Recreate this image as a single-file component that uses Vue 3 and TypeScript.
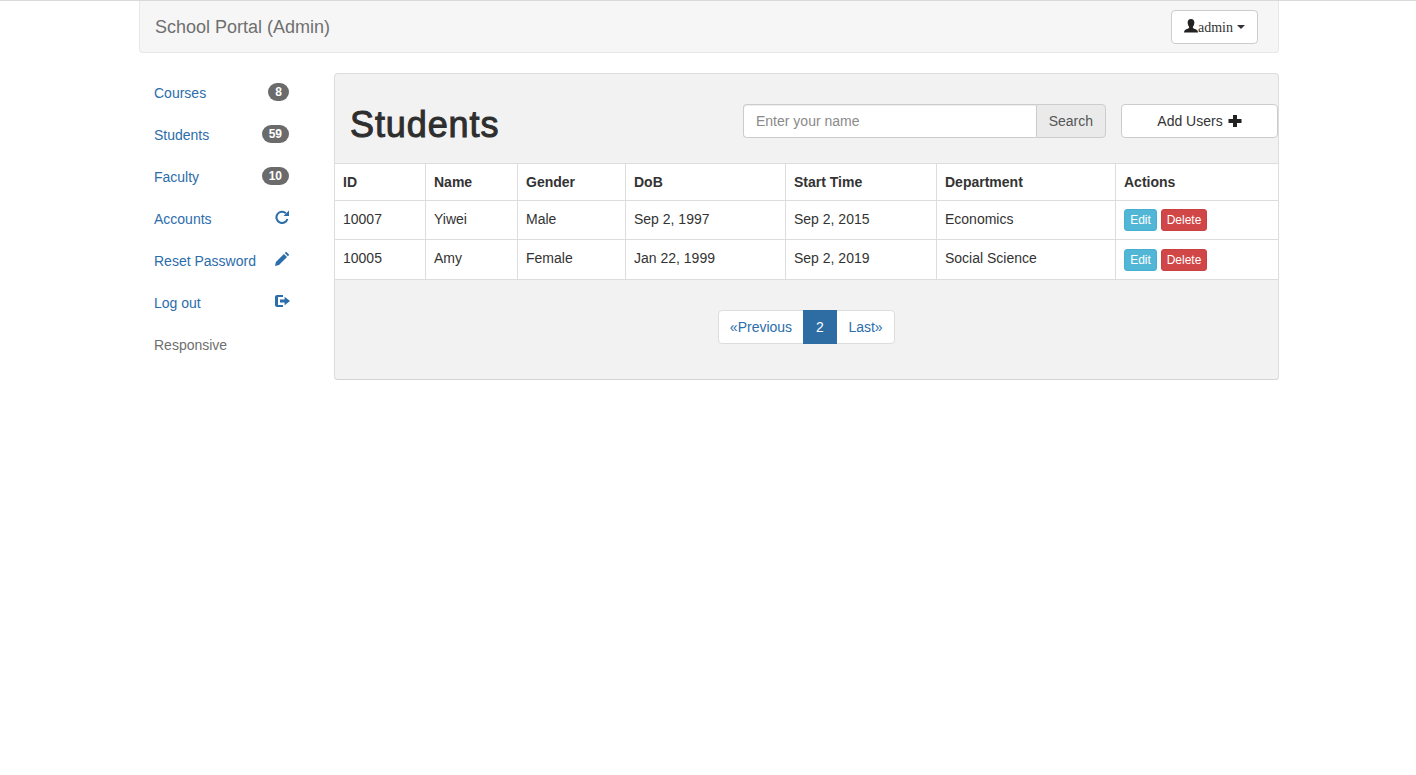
<template>
  <div class="topline"></div>
  <div class="container">
    <nav class="navbar">
      <a class="brand">School Portal (Admin)</a>
      <button class="user-btn">
        <svg class="user-icon" viewBox="0 0 14 14" width="14" height="14">
          <path d="M0 13.500c0-2 1.200-2.700 3-3.400 1.300-.5 2.200-1 2.200-1.800 0-.5-.5-.9-.9-1.800C4 5.800 3.900 5.200 3.800 4.600 3.500 4.400 3.500 3.700 3.700 3.500 3.600 1.600 4.700 0 7 0s3.400 1.600 3.300 3.500c.2.200.2.900-.1 1.100-.1.600-.2 1.200-.5 1.900-.4.900-.9 1.300-.9 1.800 0 .8.900 1.300 2.200 1.800 1.800.7 3 1.400 3 3.400z" fill="#222" />
        </svg>
        <span class="user-name">admin</span>
        <span class="caret"></span>
      </button>
    </nav>

    <div class="layout">
      <ul class="side">
        <li v-for="item in sideItems" :key="item.label">
          <a :class="{ plain: item.plain }">
            <span>{{ item.label }}</span>
            <span v-if="item.badge" class="badge">{{ item.badge }}</span>
            <svg v-if="item.icon === 'refresh'" class="side-icon" viewBox="0 0 14 14" width="14" height="14">
              <path d="M12.400 9A5.600 5.600 0 1 1 10.800 3.200" fill="none" stroke="#2c6dab" stroke-width="2.100" />
              <path d="M14 .5V6H8.500z" fill="#2c6dab" />
            </svg>
            <svg v-if="item.icon === 'pencil'" class="side-icon" viewBox="0 0 14 14" width="14" height="14">
              <path d="M0 14l.9-4 8-8 3.100 3.100-8 8zM9.800 1.100l1-1c.2-.2.500-.1.700 0l2.400 2.400c.1.200.1.500 0 .7l-1 1z" fill="#2c6dab" />
            </svg>
            <svg v-if="item.icon === 'logout'" class="side-icon wide" viewBox="0 0 15 14" width="15" height="14">
              <path d="M2 1h6v2H3v8h5v2H2c-1 0-2-.8-2-2V3c0-1.200 1-2 2-2z" fill="#2c6dab" />
              <path d="M5 5.400h4.600V2.800L15 7l-5.400 4.200V8.600H5z" fill="#2c6dab" />
            </svg>
          </a>
        </li>
      </ul>

      <section class="panel">
        <header class="panel-head">
          <h1>Students</h1>
          <div class="tools">
            <div class="search">
              <input type="text" placeholder="Enter your name" />
              <button>Search</button>
            </div>
            <button class="add-btn">
              Add Users
              <svg viewBox="0 0 14 14" width="14" height="14">
                <path d="M5 1h4v4h4.500v4H9v4H5V9H.5V5H5z" fill="#222" />
              </svg>
            </button>
          </div>
        </header>

        <table>
          <thead>
            <tr>
              <th v-for="col in columns" :key="col.name" :style="{ width: col.width + 'px' }">{{ col.name }}</th>
            </tr>
          </thead>
          <tbody>
            <tr v-for="s in students" :key="s.id">
              <td>{{ s.id }}</td>
              <td>{{ s.name }}</td>
              <td>{{ s.gender }}</td>
              <td>{{ s.dob }}</td>
              <td>{{ s.start }}</td>
              <td>{{ s.dept }}</td>
              <td class="actions">
                <div class="action-btns">
                  <button class="btn-xs info">Edit</button>
                  <button class="btn-xs danger">Delete</button>
                </div>
              </td>
            </tr>
          </tbody>
        </table>

        <div class="pager">
          <a class="prev">«Previous</a>
          <a class="active">2</a>
          <a class="last">Last»</a>
        </div>
      </section>
    </div>
  </div>
</template>

<script setup lang="ts">
interface SideItem {
  label: string
  badge?: string
  icon?: 'refresh' | 'pencil' | 'logout'
  plain?: boolean
}

const sideItems: SideItem[] = [
  { label: 'Courses', badge: '8' },
  { label: 'Students', badge: '59' },
  { label: 'Faculty', badge: '10' },
  { label: 'Accounts', icon: 'refresh' },
  { label: 'Reset Password', icon: 'pencil' },
  { label: 'Log out', icon: 'logout' },
  { label: 'Responsive', plain: true }
]

const columns = [
  { name: 'ID', width: 90 },
  { name: 'Name', width: 92 },
  { name: 'Gender', width: 108 },
  { name: 'DoB', width: 160 },
  { name: 'Start Time', width: 151 },
  { name: 'Department', width: 179 },
  { name: 'Actions', width: 163 }
]

const students = [
  { id: '10007', name: 'Yiwei', gender: 'Male', dob: 'Sep 2, 1997', start: 'Sep 2, 2015', dept: 'Economics' },
  { id: '10005', name: 'Amy', gender: 'Female', dob: 'Jan 22, 1999', start: 'Sep 2, 2019', dept: 'Social Science' }
]
</script>

<style>
html,
body {
  margin: 0;
  background: #fff;
}
</style>

<style scoped>
* {
  box-sizing: border-box;
}

.topline {
  height: 1px;
  background: #d9d9d9;
}

.container {
  width: 1142px;
  padding-left: 2px;
  margin: 0 auto;
  font-family: "Liberation Sans", Arial, sans-serif;
  font-size: 14px;
  line-height: 20px;
  color: #333;
}

.navbar {
  height: 52px;
  display: flex;
  align-items: center;
  justify-content: space-between;
  padding: 0 20px 0 15px;
  background: #f6f6f6;
  border: 1px solid #e7e7e7;
  border-top: 0;
  border-radius: 0 0 4px 4px;
  margin-bottom: 20px;
}

.brand {
  font-size: 18px;
  color: #6f6f6f;
}

.user-btn {
  display: flex;
  align-items: center;
  width: 87px;
  height: 34px;
  padding: 0 12px;
  background: #fff;
  border: 1px solid #ccc;
  border-radius: 4px;
  font-family: "Liberation Serif", "Times New Roman", serif;
  font-size: 14px;
  color: #333;
}

.user-icon {
  flex: none;
  margin-bottom: 2px;
}

.user-name {
  padding-top: 3px;
}

.caret {
  margin-left: 4px;
  border-top: 4px solid #333;
  border-left: 4px solid transparent;
  border-right: 4px solid transparent;
}

.layout {
  display: flex;
  align-items: flex-start;
}

.side {
  width: 195px;
  flex: none;
  margin: 0;
  padding: 0 30px 0 0;
  list-style: none;
}

.side li + li {
  margin-top: 2px;
}

.side a {
  display: flex;
  align-items: center;
  justify-content: space-between;
  height: 40px;
  padding: 0 15px;
  color: #2c6dab;
}

.side a.plain {
  color: #6f6f6f;
}

.badge {
  min-width: 10px;
  padding: 3px 7px;
  margin-top: -2px;
  font-size: 12px;
  font-weight: bold;
  line-height: 12px;
  color: #fff;
  background: #6b6b6b;
  border-radius: 10px;
}

.side-icon {
  margin-top: -4px;
}

.side-icon.wide {
  margin-right: -1px;
}

.panel {
  flex: 1;
  height: 307px;
  background: #f2f2f2;
  border: 1px solid #ddd;
  border-bottom-color: #d4d4d4;
  border-radius: 4px;
  box-shadow: 0 1px 1px rgba(0, 0, 0, 0.05);
}

.panel-head {
  height: 89px;
  display: flex;
  align-items: flex-start;
  justify-content: space-between;
  padding-left: 15px;
}

h1 {
  margin: 31px 0 0;
  font-size: 36px;
  line-height: 40px;
  font-weight: normal;
  letter-spacing: 0.9px;
  -webkit-text-stroke: 1px #2e2e2e;
  color: #2e2e2e;
}

.tools {
  display: flex;
  gap: 15px;
  margin-top: 30px;
}

.search {
  display: flex;
  width: 363px;
}

.search input {
  flex: 1;
  min-width: 0;
  height: 34px;
  padding: 6px 12px;
  font: inherit;
  color: #555;
  background: #fff;
  border: 1px solid #ccc;
  border-right: 0;
  border-radius: 4px 0 0 4px;
  box-shadow: inset 0 1px 1px rgba(0, 0, 0, 0.075);
}

.search input::placeholder {
  color: #8a8a8a;
}

.search button {
  height: 34px;
  padding: 0 12px;
  font: inherit;
  color: #555;
  background: #eaeaea;
  border: 1px solid #ccc;
  border-radius: 0 4px 4px 0;
}

.add-btn {
  display: flex;
  align-items: center;
  justify-content: center;
  gap: 5px;
  width: 157px;
  height: 34px;
  font: inherit;
  color: #333;
  background: #fff;
  border: 1px solid #ccc;
  border-radius: 4px;
}

table {
  width: 100%;
  table-layout: fixed;
  border-collapse: collapse;
  background: #fff;
}

th,
td {
  padding: 8px 8px 0 8.5px;
  text-align: left;
  vertical-align: top;
  border: 1px solid #ddd;
}

th {
  height: 37px;
  font-weight: bold;
}

td {
  height: 39px;
}

tbody tr:last-child td {
  height: 40px;
}

tr > :first-child {
  padding-left: 8px;
  border-left: 0;
}

tr > :last-child {
  border-right: 0;
}

tbody tr:last-child td.actions {
  padding-top: 9px;
}

.action-btns {
  display: flex;
  gap: 4px;
}

.btn-xs {
  height: 22px;
  padding: 0;
  font-family: inherit;
  font-size: 12px;
  line-height: 18px;
  color: #fff;
  border: 1px solid;
  border-radius: 3px;
}

.info {
  width: 33px;
  background: #52b6d6;
  border-color: #46afd0;
}

.danger {
  width: 46px;
  background: #d14646;
  border-color: #c94040;
}

.pager {
  display: flex;
  justify-content: center;
  margin-top: 30px;
}

.pager a {
  height: 34px;
  padding: 6px 0;
  text-align: center;
  color: #2c6dab;
  background: #fff;
  border: 1px solid #ddd;
}

.pager .prev {
  width: 86px;
  border-radius: 4px 0 0 4px;
}

.pager .active {
  position: relative;
  z-index: 1;
  width: 34px;
  margin-left: -1px;
  color: #fff;
  background: #2e6da4;
  border-color: #2e6da4;
}

.pager .last {
  width: 59px;
  margin-left: -1px;
  border-radius: 0 4px 4px 0;
}
</style>
